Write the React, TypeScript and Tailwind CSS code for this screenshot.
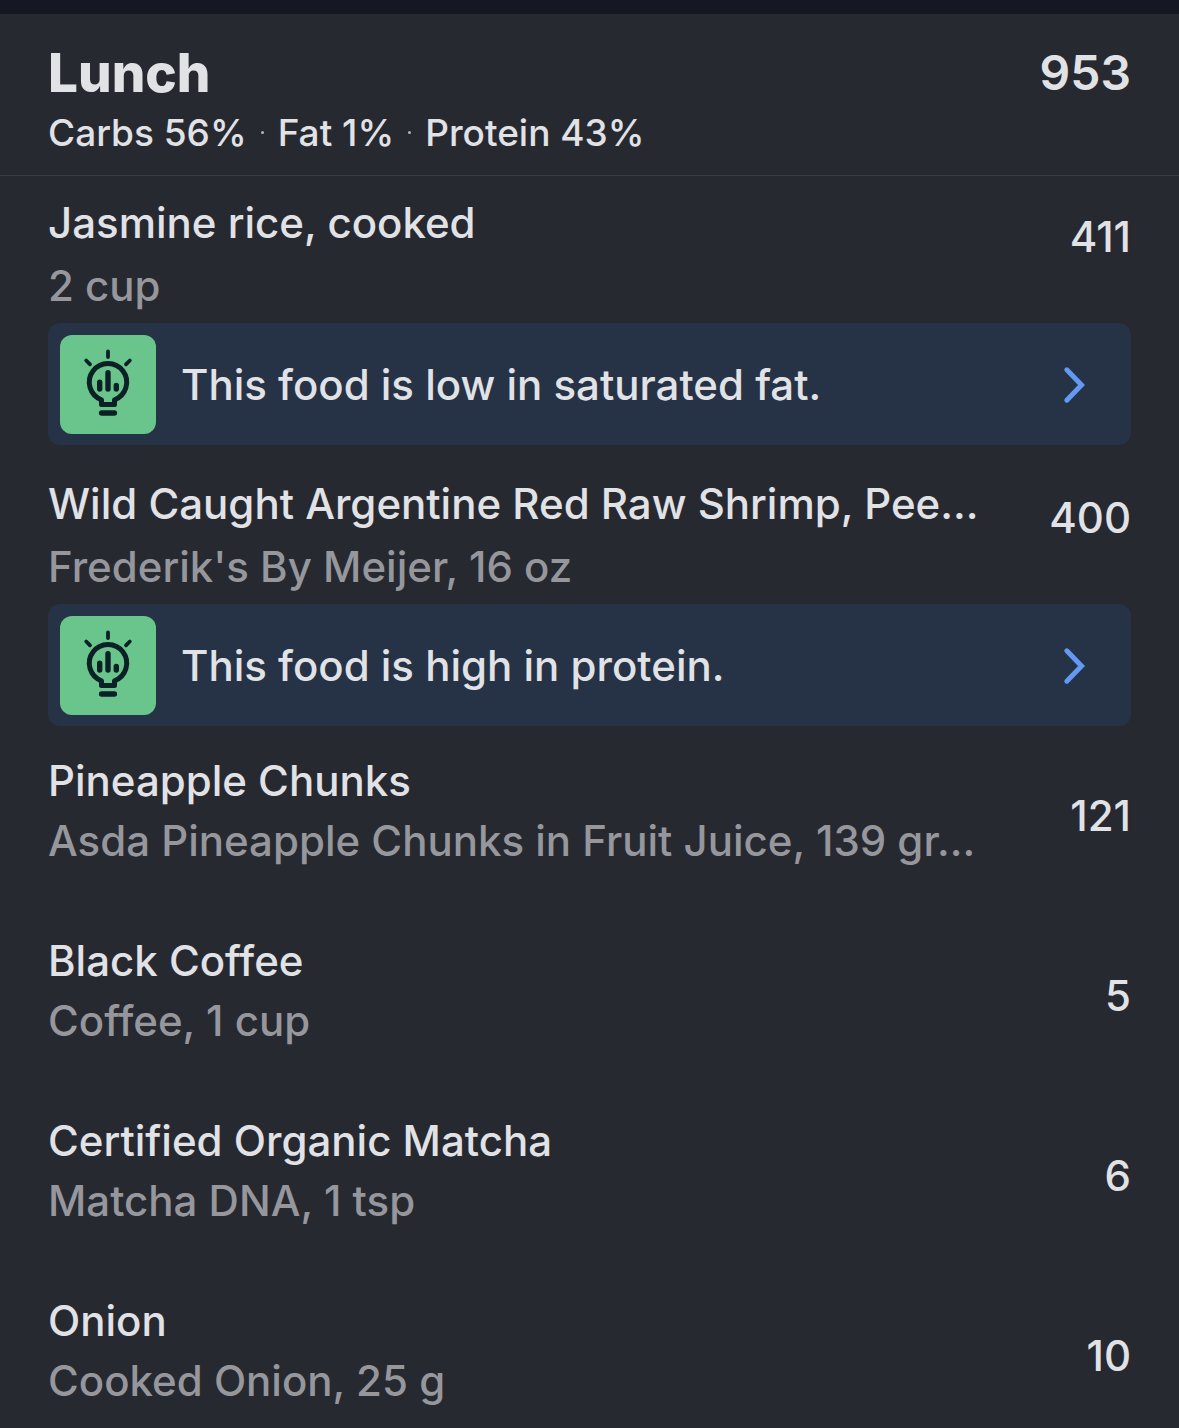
type FoodTip = {
  text: string;
};

type FoodEntry = {
  name: string;
  detail: string;
  calories: number;
  tip?: FoodTip;
};

const MACROS = ["Carbs 56%", "Fat 1%", "Protein 43%"];

const ENTRIES: FoodEntry[] = [
  {
    name: "Jasmine rice, cooked",
    detail: "2 cup",
    calories: 411,
    tip: { text: "This food is low in saturated fat." },
  },
  {
    name: "Wild Caught Argentine Red Raw Shrimp, Pee...",
    detail: "Frederik's By Meijer, 16 oz",
    calories: 400,
    tip: { text: "This food is high in protein." },
  },
  {
    name: "Pineapple Chunks",
    detail: "Asda Pineapple Chunks in Fruit Juice, 139 gr...",
    calories: 121,
  },
  { name: "Black Coffee", detail: "Coffee, 1 cup", calories: 5 },
  { name: "Certified Organic Matcha", detail: "Matcha DNA, 1 tsp", calories: 6 },
  { name: "Onion", detail: "Cooked Onion, 25 g", calories: 10 },
];

function InsightIcon() {
  return (
    <svg
      viewBox="0 0 96 99"
      className="h-[99px] w-24 shrink-0 rounded-xl bg-[#69c58b]"
      fill="none"
      stroke="#0c2126"
      strokeLinecap="round"
      strokeLinejoin="round"
      aria-hidden="true"
    >
      {/* rays */}
      <path d="M48 16.3V22M26.2 25.5L30 29.3M69.8 25.5L66 29.3" strokeWidth="3.8" />
      {/* bulb */}
      <path d="M41.5 64.8A18.7 18.7 0 1 1 54.5 64.8V69.4H41.5Z" strokeWidth="5" />
      <path d="M41.6 78H54.4" strokeWidth="5.4" />
      {/* bars */}
      <path d="M39.7 47.3V54M48 37.8V54M56.3 50.4V54" strokeWidth="5.4" />
    </svg>
  );
}

function TipBanner({ tip }: { tip: FoodTip }) {
  return (
    <button
      type="button"
      className="mt-1.5 flex h-[122px] w-full items-center rounded-xl bg-[#263245] pr-11 pl-3 text-left"
    >
      <InsightIcon />
      <span className="ml-[25px] flex-1">{tip.text}</span>
      <svg
        viewBox="0 0 24 40"
        className="h-10 w-6 shrink-0"
        fill="none"
        stroke="#6399f2"
        strokeWidth="5"
        strokeLinecap="round"
        aria-hidden="true"
      >
        <path d="M3.8 5.8L18.5 21L3.8 36.2" />
      </svg>
    </button>
  );
}

function TipRow({ entry, tip }: { entry: FoodEntry; tip: FoodTip }) {
  return (
    <li className="px-12 pt-[15px] pb-3 leading-[63px]">
      <div className="flex items-start justify-between">
        <div className="whitespace-nowrap">
          <h2>{entry.name}</h2>
          <p className="text-[#96979c]">{entry.detail}</p>
        </div>
        <span className="pt-3.5">{entry.calories}</span>
      </div>
      <TipBanner tip={tip} />
    </li>
  );
}

function FoodRow({ entry }: { entry: FoodEntry }) {
  return (
    <li className="flex items-start justify-between px-12 pt-[13px] pb-[47px] leading-[60px] last:pb-4">
      <div className="whitespace-nowrap">
        <h2>{entry.name}</h2>
        <p className="text-[#96979c]">{entry.detail}</p>
      </div>
      <span className="pt-[35px]">{entry.calories}</span>
    </li>
  );
}

export default function App() {
  return (
    <main className="min-h-screen border-t-[14px] border-[#151723] bg-[#272931] font-[Inter,sans-serif] text-[42px] font-medium text-[#e1e2e5]">
      <header className="border-b border-[#3c3e46] px-12 pt-[29px] pb-[17px]">
        <div className="flex items-center justify-between leading-[60px]">
          <h1 className="text-[53px] font-extrabold">Lunch</h1>
          <span className="text-5xl leading-[60px] font-semibold">953</span>
        </div>
        <p className="flex items-center gap-3.5 pt-1 text-[37px] leading-[51px]">
          {MACROS.map((macro, i) => (
            <span key={macro} className="flex items-center gap-3.5">
              {i > 0 && <span className="size-[3px] rounded-full bg-[#b4b5b9]" />}
              {macro}
            </span>
          ))}
        </p>
      </header>
      <ul>
        {ENTRIES.map((entry) =>
          entry.tip ? (
            <TipRow key={entry.name} entry={entry} tip={entry.tip} />
          ) : (
            <FoodRow key={entry.name} entry={entry} />
          )
        )}
      </ul>
    </main>
  );
}
